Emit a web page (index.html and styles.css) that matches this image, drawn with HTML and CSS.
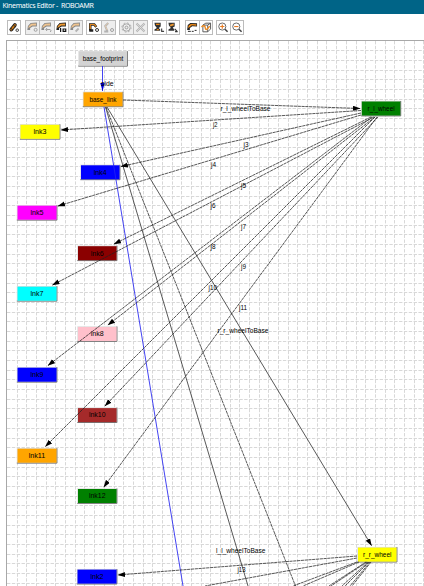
FILE: index.html
```
<!DOCTYPE html>
<html lang="en">
<head>
<meta charset="utf-8">
<title>Kinematics Editor - ROBOAMR</title>
<link rel="stylesheet" href="styles.css">
</head>
<body>
<svg class="defs" width="0" height="0">
  <defs>
    <marker id="arrow" markerWidth="9" markerHeight="6" refX="7" refY="2.5" orient="auto" markerUnits="userSpaceOnUse"><path d="M0 0L7.5 2.5L0 5Z"/></marker>
    <marker id="arrow-blue" markerWidth="9" markerHeight="6" refX="8" refY="2.25" orient="auto" markerUnits="userSpaceOnUse"><path d="M0 0L8 2.25L0 4.5Z" fill="#00d"/></marker>
    <symbol id="robot" viewBox="0 0 13 13"><path d="M1.2 9L1.8 5L4.5 2L10.8 1.6V5.5L6.5 5.5L4 7V9Z" fill="#222"/><path d="M2 7L2.8 5L5 2.8L10 2.6V4.4L6 4.4L3.8 6Z" fill="#f09a30"/></symbol>
  </defs>
</svg>
<header class="title">Kinematics Editor -  ROBOAMR</header>
<nav class="toolbar">
  <div class="group g1">
    <button class="btn"><svg viewBox="0 0 13 13"><path d="M3.5 8.8L7.5 3.8" stroke="#222" stroke-width="4" stroke-linecap="round"/><path d="M3.5 8.8L7.5 3.8" stroke="#c97716" stroke-width="2" stroke-linecap="round"/><path d="M3 7.3l2.5 2M6 4l2.5 2" stroke="#222"/><circle cx="10" cy="9.4" r="1.4" stroke="#333"/></svg></button>
  </div>
  <div class="group g2">
    <button class="btn off"><svg viewBox="0 0 13 13"><use href="#robot"/><circle cx="9.5" cy="8.8" r="1.5" stroke="#555"/></svg></button>
    <button class="btn off"><svg viewBox="0 0 13 13"><use href="#robot"/><path d="M7 7L5.5 8.5L7 10M6 8.5H10Q12 10 10 11" stroke="#555"/></svg></button>
    <button class="btn"><svg viewBox="0 0 13 13"><use href="#robot"/><path d="M5.5 7v4M8 8v2.3h2.6V8z" stroke="#111" stroke-width="1.2"/></svg></button>
    <button class="btn off"><svg viewBox="0 0 13 13"><use href="#robot"/><path d="M6.5 10.5L9.5 7.5" stroke="#777" stroke-width="1.8"/></svg></button>
  </div>
  <div class="group g3">
    <button class="btn"><svg viewBox="0 0 13 13"><path d="M3 9.5V3.5H7L9 6M2 9.5h4" stroke="#222" stroke-width="2.5"/><path d="M3 8V3.5H7L9 5.5" stroke="#e58a20" stroke-width="1.2"/><circle cx="9.8" cy="9" r="1.5" stroke="#333"/></svg></button>
    <button class="btn off"><svg viewBox="0 0 13 13"><path d="M6 2L3 5L5 10M2 10.5h4" stroke="#777" stroke-width="2"/><path d="M6 2L3 5L5 9" stroke="#d6a46c"/><circle cx="9.8" cy="9" r="1.5" stroke="#555"/></svg></button>
  </div>
  <div class="group g4">
    <button class="btn off"><svg viewBox="0 0 13 13"><circle cx="6.5" cy="6.5" r="1.4" stroke="#555"/><circle cx="6.5" cy="6.5" r="3.7" stroke="#666"/><circle cx="6.5" cy="6.5" r="4.6" stroke="#666" stroke-dasharray="1.8 1.8"/></svg></button>
    <button class="btn off"><svg viewBox="0 0 13 13"><path d="M2.5 2.5L10.5 10.5M10.5 2.5L2.5 10.5" stroke="#777" stroke-width="2"/><path d="M2.5 2.5L10.5 10.5M10.5 2.5L2.5 10.5" stroke="#eee" stroke-width=".6"/></svg></button>
  </div>
  <div class="group g5">
    <button class="btn"><svg viewBox="0 0 13 13"><path d="M1.5 1.5H8V5.5L6 7L7.5 8.5V10H1.5V8.5L4 7L2 4.5Z" fill="#333"/><path d="M3.2 3.2H6.8M4 8.8H6" stroke="#e88412" stroke-width="1.3"/><path d="M9 7.5v3.5M8.5 10.5h3" stroke="#444" stroke-width="1.2"/></svg></button>
    <button class="btn"><svg viewBox="0 0 13 13"><path d="M1.5 1.5H8V5.5L6 6.5L7.5 8.5V10H1.5V8.5L4 7L2 4.5Z" fill="#333"/><path d="M3.2 4.5L7 3.2" stroke="#f09a30" stroke-width="1.8"/><path d="M8 8l3 3M9 8.5v2.3h2" stroke="#333" stroke-width="1.2"/></svg></button>
  </div>
  <div class="group g6">
    <button class="btn"><svg viewBox="0 0 13 13"><path d="M1.2 9L1.8 4L4.5 1.8L11.5 2V5.5L6.5 5.2L4 7V9Z" fill="#222"/><path d="M2 7L2.8 4.5L5 2.8L10.8 3V4.6L6 4.2L4 6Z" fill="#f08a16"/><path d="M2 10.5H5M6 10.5h2M9 9.5h2" stroke="#222"/></svg></button>
    <button class="btn"><svg viewBox="0 0 13 13"><path d="M3 4L6 2H11V8L8 11H3ZM3 4H8V11M8 4L11 2" stroke="#555"/><path d="M1.5 6Q5 3 5.5 7T10 5" stroke="#ee8d25" stroke-width="1.5"/></svg></button>
  </div>
  <div class="group g7">
    <button class="btn"><svg viewBox="0 0 13 13"><circle cx="5.5" cy="5.5" r="3.7" stroke="#666"/><path d="M8.3 8.3L11 11" stroke="#444" stroke-width="1.6"/><path d="M3.3 5.5H7.7M5.5 3.3V7.7" stroke="#e87b22" stroke-width="1.2"/></svg></button>
    <button class="btn"><svg viewBox="0 0 13 13"><circle cx="5.5" cy="5.5" r="3.7" stroke="#666"/><path d="M8.3 8.3L11 11" stroke="#444" stroke-width="1.6"/><path d="M3.3 5.5H7.7" stroke="#e87b22" stroke-width="1.2"/></svg></button>
  </div>
</nav>
<main class="canvas">
  <svg class="graph" viewBox="7 41 417 545" width="417" height="545">
    <g id="grid" class="grid"></g>
    <g id="nodes"></g>
    <g id="edges"></g>
    <g id="labels"></g>
  </svg>
</main>
<script src="graph.js"></script>
</body>
</html>
```
FILE: styles.css
```
* { box-sizing: border-box; }
body {
  margin: 0;
  width: 424px;
  height: 586px;
  overflow: hidden;
  background: #fff;
  font-family: "Liberation Sans", sans-serif;
}
.defs { position: absolute; }
.title {
  height: 14px;
  padding-left: 2.5px;
  background: #006487;
  color: #fff;
  font: 7px/12px "Noto Sans", "Open Sans", sans-serif;
  letter-spacing: -0.32px;
  white-space: pre;
}
.toolbar {
  display: flex;
  height: 26px;
  padding: 6px 0 0 7px;
}
.group {
  display: flex;
  height: 15px;
  border: 1px solid #bcbcbc;
}
.g1 { width: 14px; margin-right: 4px; }
.g2 { width: 58px; margin-right: 3px; }
.g3 { width: 30px; margin-right: 3px; }
.g4 { width: 29px; margin-right: 4px; }
.g5 { width: 28px; margin-right: 5px; }
.g6 { width: 28px; margin-right: 3px; }
.g7 { width: 28px; }
.btn {
  flex: 1;
  min-width: 0;
  padding: 0;
  border: 0;
  background: #fff;
}
.btn + .btn { border-left: 1px solid #bcbcbc; }
.btn svg { display: block; width: 100%; height: 13px; fill: none; }
.btn.off { background: #eee; }
.off svg { opacity: 0.5; }
.canvas {
  margin-left: 6px;
  height: 546px;
  border-top: 1px solid #a8a8a8;
  border-left: 1px solid #a8a8a8;
}
.graph { display: block; }
.graph text {
  font: 7.6px "Liberation Sans", sans-serif;
  fill: #000;
}
.grid line { stroke: #d8d8d8; stroke-width: 1; stroke-dasharray: 3.4 1.44; }
.edge-line { stroke: #222; stroke-width: 0.75; }
.dashed { stroke-dasharray: 3.2 0.6; }
.blue { stroke: #2222f0; stroke-width: 0.85; }
```
FILE: graph.js
```
const NS = "http://www.w3.org/2000/svg";
function add(parent, tag, attrs, text) {
  const el = document.createElementNS(NS, tag);
  for (const k in attrs) el.setAttribute(k, attrs[k]);
  if (text) el.textContent = text;
  document.getElementById(parent).appendChild(el);
}

const STEP = 9.68;
for (let x = 17.2; x < 424; x += STEP) {
  const px = Math.floor(x) + 0.5;
  add("grid", "line", { x1: px, y1: 41, x2: px, y2: 586 });
}
for (let y = 50.8; y < 586; y += STEP) {
  const py = Math.floor(y) + 0.5;
  add("grid", "line", { x1: 7, y1: py, x2: 424, y2: py });
}

// name, left, top, width, fill, text width
const nodes = [
  ["base_footprint", 79, 51.7, 48, "#d3d3d3", 40.5],
  ["base_link", 83.5, 92.3, 39, "#ffa500", 27],
  ["r_l_wheel", 361.8, 101.5, 38.5, "#008000", 27],
  ["lnk3", 20.5, 124.8, 39, "#ffff00", 13],
  ["lnk4", 81, 165.3, 38.5, "#0000ff", 13],
  ["lnk5", 17.5, 205.7, 39, "#ff00ff", 13],
  ["lnk6", 78, 246.2, 38.5, "#8b0000", 13],
  ["lnk7", 17.5, 286.7, 39, "#00ffff", 13],
  ["lnk8", 78, 327, 38.5, "#ffc0cb", 13],
  ["lnk9", 17.5, 367.7, 39, "#0000ff", 13],
  ["lnk10", 78, 408.1, 38.5, "#a52a2a", 16.5],
  ["lnk11", 17.5, 448.7, 39, "#ffa500", 16.5],
  ["lnk12", 78, 489, 38.5, "#008000", 16.5],
  ["lnk2", 77.5, 569.6, 39, "#0000ff", 13],
  ["r_r_wheel", 358, 547.6, 38.5, "#ffff00", 28.5]
];
for (const [name, x, y, w, fill, tw] of nodes) {
  add("nodes", "rect", { x: x - 0.7, y: y - 0.7, width: w + 1.6, height: 15.4, fill: "#ddd" });
  add("nodes", "path", { d: `M${x - 0.7} ${y + 14.4}H${x + w + 0.4}V${y - 0.5}`, fill: "none", stroke: "#777", "stroke-width": 1 });
  add("nodes", "rect", { x, y, width: w, height: 14, fill });
  add("nodes", "text", { x: x + w / 2 - tw / 2, y: y + 9.3, textLength: tw, lengthAdjust: "spacingAndGlyphs" }, name);
}

// x1, y1, x2, y2, class, arrowhead
const edges = [
  [102.5, 66, 102.5, 91, "blue", "arrow-blue"],
  [104, 107, 183, 586, "blue", ""],
  [105.5, 107, 248, 586, "", ""],
  [106, 107, 295.5, 586, "dashed", ""],
  [107, 107, 371.5, 545.5, "", "arrow"],
  [123, 100, 360, 108.5, "dashed", "arrow"],
  [361, 110.5, 61, 130, "dashed", "arrow"],
  [361, 113, 121, 166.5, "dashed", "arrow"],
  [361, 115, 58, 206, "dashed", "arrow"],
  [371, 117, 114, 244, "dashed", "arrow"],
  [374, 117, 52.5, 285, "dashed", "arrow"],
  [375, 117, 108, 325, "dashed", "arrow"],
  [372, 117, 48, 365.5, "dashed", "arrow"],
  [378, 117, 105, 406, "dashed", "arrow"],
  [375, 117, 45.5, 446.5, "dashed", "arrow"],
  [377, 117, 103.8, 487, "dashed", "arrow"],
  [357, 556, 118, 575, "dashed", "arrow"],
  [357, 558, 205, 586, "dashed", ""],
  [357, 562, 293, 586, "dashed", ""],
  [359, 562, 303, 586, "dashed", ""],
  [366, 562, 329, 586, "dashed", ""],
  [367, 562, 331, 586, "dashed", ""],
  [368, 562, 342, 586, "dashed", ""],
  [369, 562, 345, 586, "dashed", ""],
  [370, 562, 350, 586, "dashed", ""],
  [371, 562, 352, 586, "dashed", ""]
];
for (const [x1, y1, x2, y2, cls, head] of edges) {
  const attrs = { x1, y1, x2, y2, class: "edge-line " + cls };
  if (head) attrs["marker-end"] = `url(#${head})`;
  add("edges", "line", attrs);
}

// text, left, baseline, width
const labels = [
  ["side", 101, 85.5, 12.5], ["r_l_wheelToBase", 220.5, 110.8, 50], ["j2", 213, 127, 4.5],
  ["j3", 243.5, 147, 5], ["j4", 211, 167.2, 5], ["j5", 241, 187.7, 5], ["j6", 210.5, 208, 5],
  ["j7", 241, 228.5, 5], ["j8", 210.5, 248.7, 5], ["j9", 241, 269, 5], ["j10", 208.5, 289.7, 8.5],
  ["j11", 239, 309.5, 8], ["r_r_wheelToBase", 217.5, 333.3, 51], ["l_l_wheelToBase", 216, 552.8, 49.5],
  ["j13", 237.5, 572.3, 8]
];
for (const [text, x, y, w] of labels) add("labels", "text", { x, y, textLength: w, lengthAdjust: "spacingAndGlyphs" }, text);
```
